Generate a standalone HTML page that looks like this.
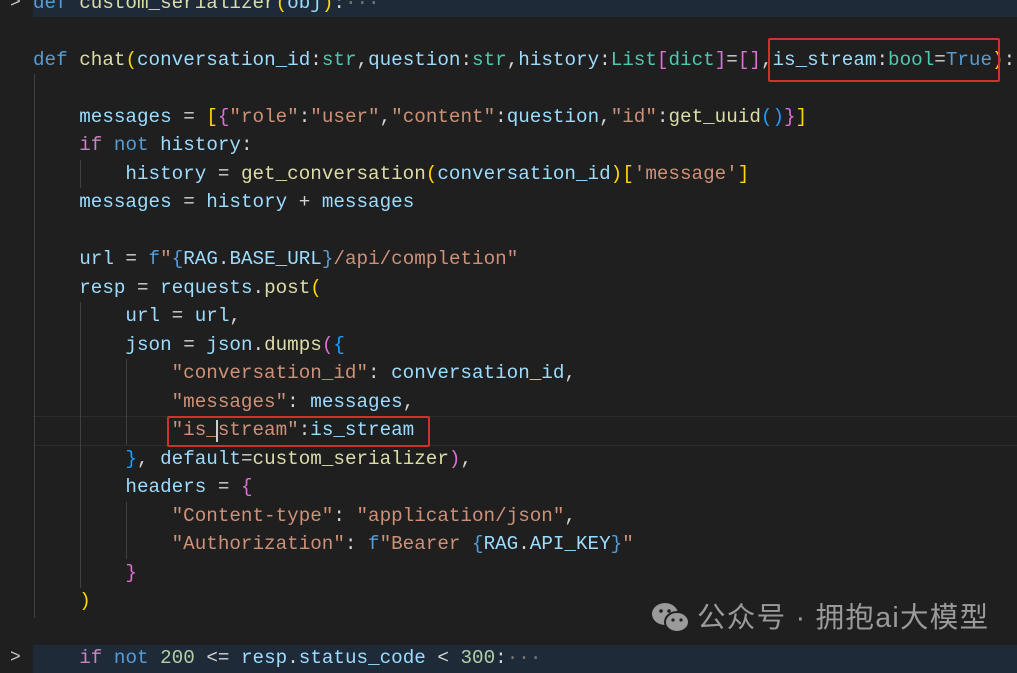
<!DOCTYPE html>
<html><head><meta charset="utf-8"><style>
body{margin:0;width:1017px;height:660px;background:#1f1f1f;overflow:hidden;position:relative;font-family:"Liberation Mono",monospace;font-size:19.25px;}
.l{position:absolute;left:33px;height:28.5px;line-height:28.5px;white-space:pre;color:#d4d4d4;}
.k{color:#569cd6}.f{color:#dcdcaa}.v{color:#9cdcfe}.t{color:#4ec9b0}.s{color:#ce9178}.c{color:#c586c0}
.b1{color:#ffd700}.b2{color:#da70d6}.b3{color:#179fff}.n{color:#b5cea8}
.g{position:absolute;width:1px;background:#404040}
.box{position:absolute;border:2px solid #d0312d;border-radius:2px}
.hl{position:absolute;left:33px;right:0;background:#1f2a38}
</style></head><body>
<div class="hl" style="top:-11px;height:28px"></div>
<div class="hl" style="top:645px;height:28px"></div>
<div style="position:absolute;left:33px;right:0;top:416px;height:28px;border-top:1px solid #2c2c2c;border-bottom:1px solid #2c2c2c"></div>
<div class="g" style="left:34px;top:74px;height:544px"></div>
<div class="g" style="left:80px;top:160px;height:28px"></div>
<div class="g" style="left:80px;top:302px;height:286px"></div>
<div class="g" style="left:126px;top:359px;height:86px"></div>
<div class="g" style="left:126px;top:502px;height:57px"></div>
<div style="position:absolute;left:10px;top:-11px;line-height:28.5px;color:#c5c5c5;font-size:18px">&gt;</div>
<div style="position:absolute;left:10px;top:644px;line-height:28.5px;color:#c5c5c5;font-size:18px">&gt;</div>
<div class="l" style="top:-11px"><span class="k">def</span> <span class="f">custom_serializer</span><span class="b1">(</span><span class="v">obj</span><span class="b1">)</span>:<span style="color:#777">···</span></div>
<div class="l" style="top:46px"><span class="k">def</span> <span class="f">chat</span><span class="b1">(</span><span class="v">conversation_id</span>:<span class="t">str</span>,<span class="v">question</span>:<span class="t">str</span>,<span class="v">history</span>:<span class="t">List</span><span class="b2">[</span><span class="t">dict</span><span class="b2">]</span>=<span class="b2">[]</span>,<span class="v">is_stream</span>:<span class="t">bool</span>=<span class="k">True</span><span class="b1">)</span>:</div>
<div class="l" style="top:103px">    <span class="v">messages</span> = <span class="b1">[</span><span class="b2">{</span><span class="s">"role"</span>:<span class="s">"user"</span>,<span class="s">"content"</span>:<span class="v">question</span>,<span class="s">"id"</span>:<span class="f">get_uuid</span><span class="b3">()</span><span class="b2">}</span><span class="b1">]</span></div>
<div class="l" style="top:131px">    <span class="c">if</span> <span class="k">not</span> <span class="v">history</span>:</div>
<div class="l" style="top:160px">        <span class="v">history</span> = <span class="f">get_conversation</span><span class="b1">(</span><span class="v">conversation_id</span><span class="b1">)</span><span class="b1">[</span><span class="s">'message'</span><span class="b1">]</span></div>
<div class="l" style="top:188px">    <span class="v">messages</span> = <span class="v">history</span> + <span class="v">messages</span></div>
<div class="l" style="top:245px">    <span class="v">url</span> = <span class="k">f</span><span class="s">"</span><span class="k">{</span><span class="v">RAG</span>.<span class="v">BASE_URL</span><span class="k">}</span><span class="s">/api/completion"</span></div>
<div class="l" style="top:274px">    <span class="v">resp</span> = <span class="v">requests</span>.<span class="f">post</span><span class="b1">(</span></div>
<div class="l" style="top:302px">        <span class="v">url</span> = <span class="v">url</span>,</div>
<div class="l" style="top:331px">        <span class="v">json</span> = <span class="v">json</span>.<span class="f">dumps</span><span class="b2">(</span><span class="b3">{</span></div>
<div class="l" style="top:359px">            <span class="s">"conversation_id"</span>: <span class="v">conversation_id</span>,</div>
<div class="l" style="top:388px">            <span class="s">"messages"</span>: <span class="v">messages</span>,</div>
<div class="l" style="top:416px">            <span class="s">"is_stream"</span>:<span class="v">is_stream</span></div>
<div class="l" style="top:445px">        <span class="b3">}</span>, <span class="v">default</span>=<span class="f">custom_serializer</span><span class="b2">)</span>,</div>
<div class="l" style="top:473px">        <span class="v">headers</span> = <span class="b2">{</span></div>
<div class="l" style="top:502px">            <span class="s">"Content-type"</span>: <span class="s">"application/json"</span>,</div>
<div class="l" style="top:530px">            <span class="s">"Authorization"</span>: <span class="k">f</span><span class="s">"Bearer </span><span class="k">{</span><span class="v">RAG</span>.<span class="v">API_KEY</span><span class="k">}</span><span class="s">"</span></div>
<div class="l" style="top:559px">        <span class="b2">}</span></div>
<div class="l" style="top:587px">    <span class="b1">)</span></div>
<div class="l" style="top:644px">    <span class="c">if</span> <span class="k">not</span> <span class="n">200</span> &lt;= <span class="v">resp</span>.<span class="v">status_code</span> &lt; <span class="n">300</span>:<span style="color:#777">···</span></div>
<div class="box" style="left:768px;top:38px;width:228px;height:40px"></div>
<div class="box" style="left:167px;top:416px;width:259px;height:27px"></div>
<div style="position:absolute;left:216px;top:420px;width:2px;height:22px;background:#ccc"></div>
<svg style="position:absolute;left:650px;top:601px" width="42" height="34" viewBox="0 0 42 34">
<ellipse cx="15" cy="13" rx="13" ry="11" fill="#9a9a9a"/><ellipse cx="27" cy="21" rx="12" ry="10" fill="#9a9a9a" stroke="#1f1f1f" stroke-width="2"/>
<circle cx="11" cy="10" r="1.8" fill="#1f1f1f"/><circle cx="19" cy="10" r="1.8" fill="#1f1f1f"/><circle cx="23" cy="19" r="1.6" fill="#1f1f1f"/><circle cx="31" cy="19" r="1.6" fill="#1f1f1f"/></svg>
<div style="position:absolute;left:697px;top:599px;font-family:'Liberation Sans','Noto Sans CJK SC',sans-serif;font-size:28.5px;letter-spacing:1.3px;color:#9a9a9a;line-height:38px;white-space:nowrap">公众号 · 拥抱ai大模型</div>
</body></html>
